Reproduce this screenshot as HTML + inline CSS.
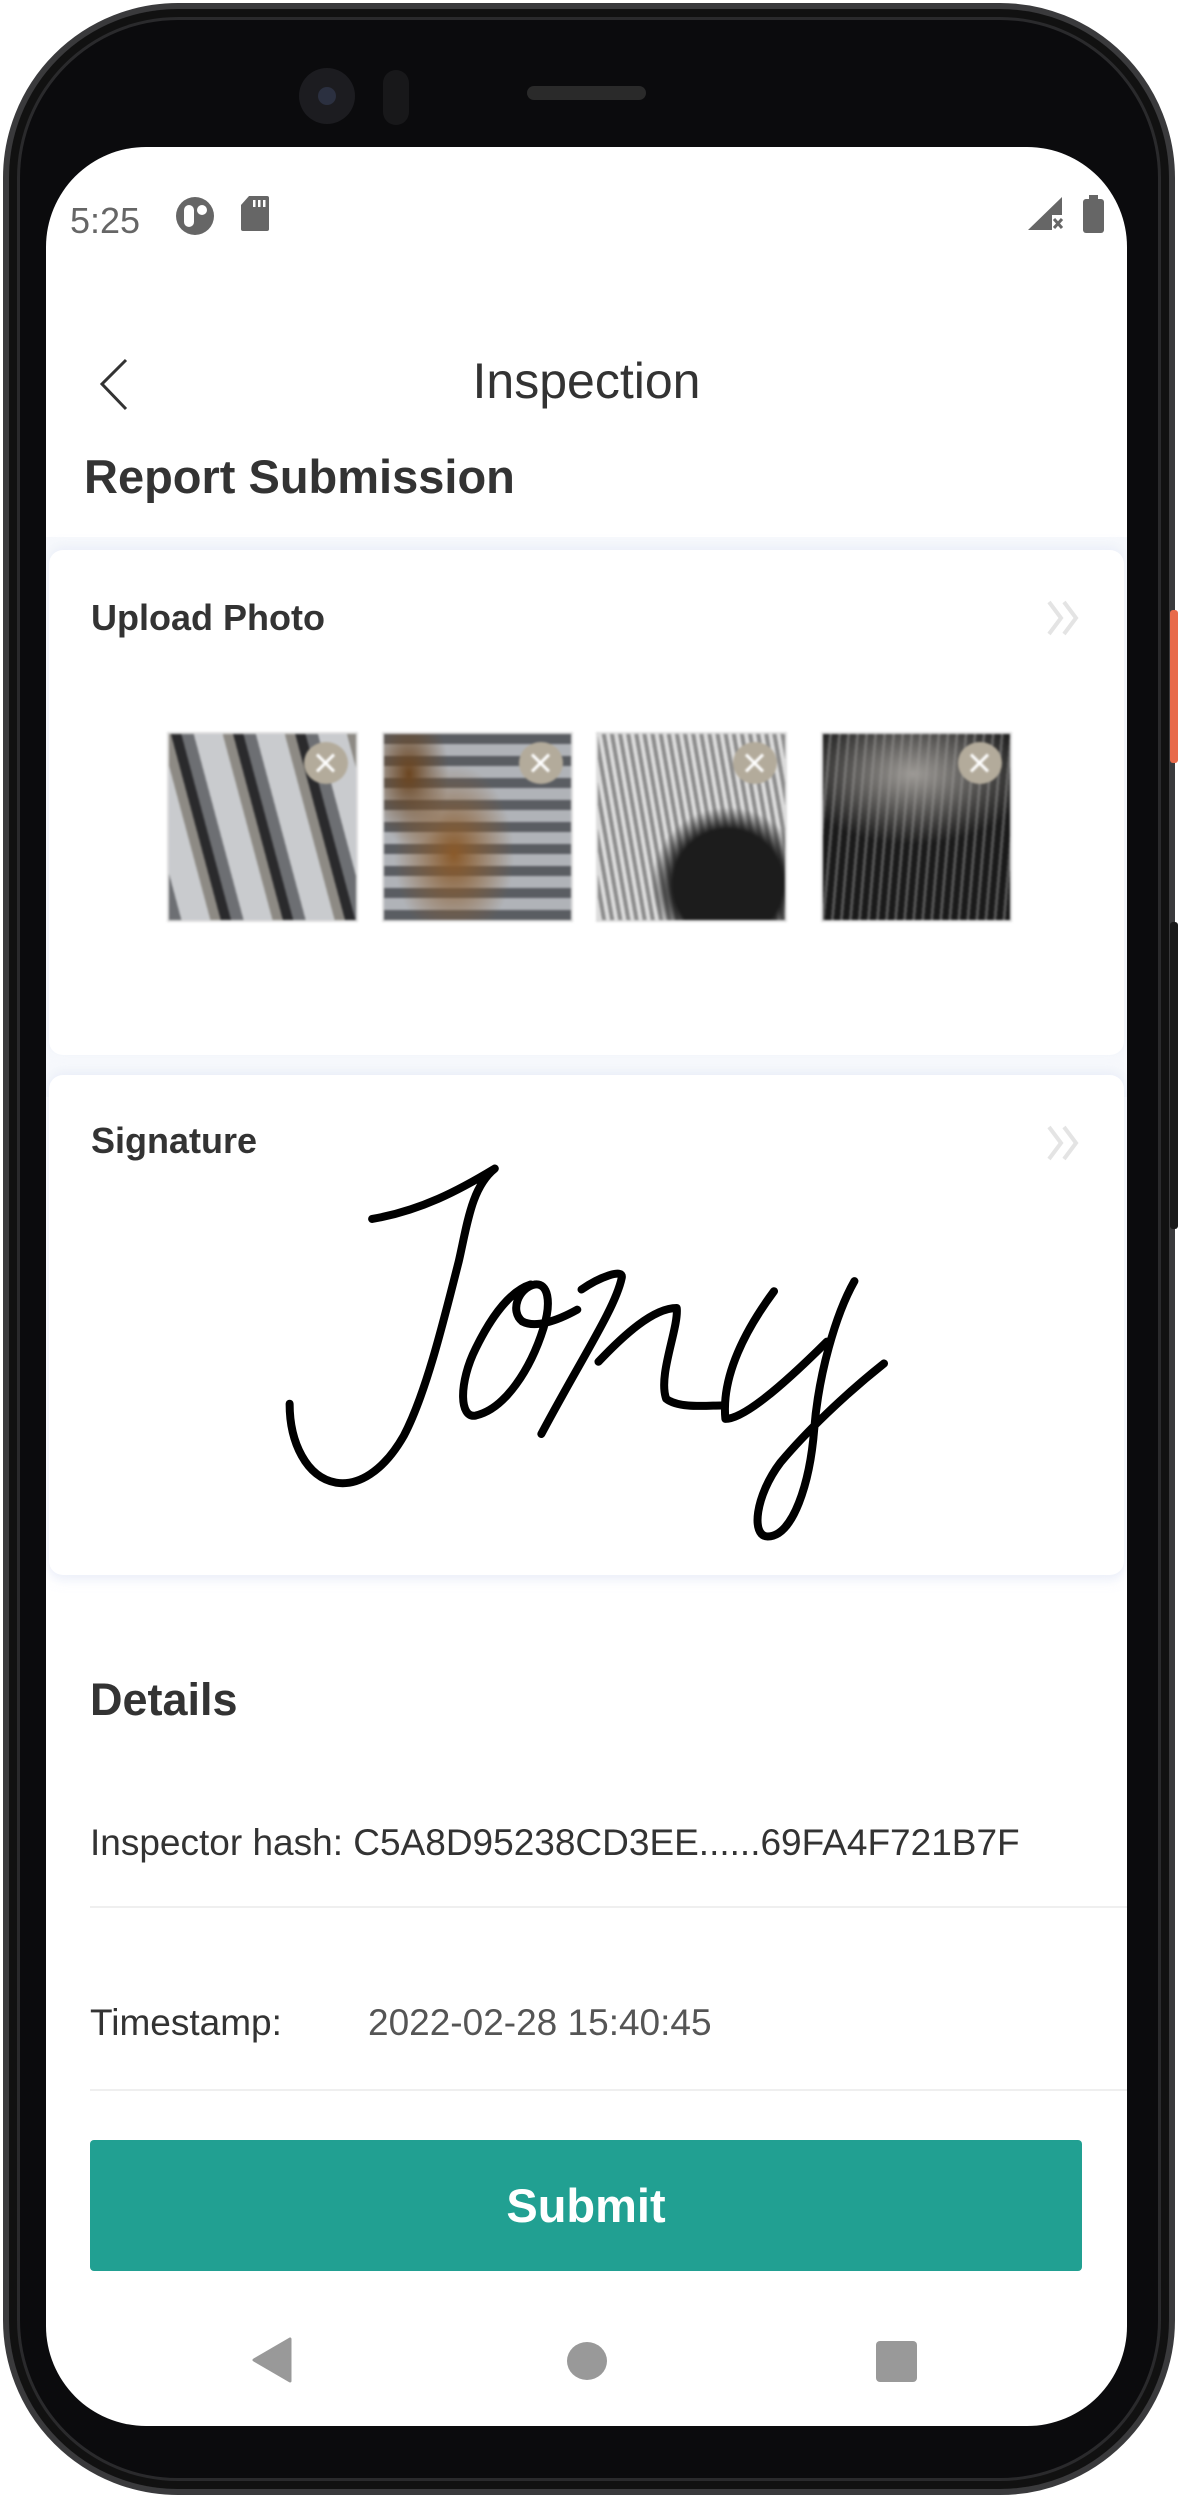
<!DOCTYPE html>
<html><head><meta charset="utf-8"><style>
*{margin:0;padding:0;box-sizing:border-box}
html,body{width:1178px;height:2498px;background:#fff;overflow:hidden;font-family:"Liberation Sans",sans-serif}
.abs{position:absolute}
#phone{left:3px;top:3px;width:1172px;height:2492px;border-radius:175px;background:#0b0b0d;border:6px solid #3a3a3c;box-shadow:inset 0 0 0 8px #111,inset 0 0 0 11px #2a2a2c}
#screen{left:46px;top:147px;width:1081px;height:2279px;background:#fff;border-radius:100px;overflow:hidden}
.t{position:absolute;white-space:nowrap;color:#333}
.card{position:absolute;left:3px;width:1075px;background:#fff;border-radius:14px;box-shadow:0 -4px 10px rgba(225,232,245,.55)}
.ph{position:absolute;width:191px;height:190px;border:2px solid #ddd;overflow:hidden;filter:blur(1px)}
.x{position:absolute;right:8px;top:8px;width:44px;height:42px;border-radius:50%;background:#b3ab9b}
.x:before,.x:after{content:"";position:absolute;left:20px;top:9px;width:3px;height:24px;background:#fff;transform:rotate(45deg)}
.x:after{transform:rotate(-45deg)}
.chev{position:absolute}
</style></head><body>
<div id="phone" class="abs"></div>
<div class="abs" style="left:1170px;top:610px;width:8px;height:153px;background:#e86a4a;border-radius:3px"></div>
<div class="abs" style="left:1170px;top:922px;width:8px;height:307px;background:#1a1a1a;border-radius:3px"></div>
<div class="abs" style="left:299px;top:68px;width:56px;height:56px;border-radius:50%;background:#1c1c20"></div>
<div class="abs" style="left:318px;top:87px;width:18px;height:18px;border-radius:50%;background:#2b3040"></div>
<div class="abs" style="left:383px;top:70px;width:26px;height:55px;border-radius:13px;background:#18181a"></div>
<div class="abs" style="left:527px;top:86px;width:119px;height:14px;border-radius:7px;background:#2a2a2a"></div>

<div id="screen" class="abs">
 <div class="t" style="left:24px;top:53px;font-size:36px;color:#666">5:25</div>
 <svg class="abs" style="left:129px;top:49px" width="40" height="40" viewBox="0 0 40 40"><circle cx="20" cy="20" r="19" fill="#666"/><rect x="9" y="9" width="10" height="22" rx="5" fill="#fff"/><circle cx="27" cy="14" r="5" fill="#fff"/></svg>
 <svg class="abs" style="left:194px;top:49px" width="30" height="35" viewBox="0 0 30 35"><path d="M9 0H27Q29 0 29 2V33Q29 35 27 35H3Q1 35 1 33V9Z" fill="#666"/><rect x="13" y="4" width="2.5" height="7" fill="#fff"/><rect x="18" y="4" width="2.5" height="7" fill="#fff"/><rect x="23" y="4" width="2.5" height="7" fill="#fff"/></svg>
 <svg class="abs" style="left:982px;top:50px" width="36" height="34" viewBox="0 0 36 34"><path d="M34 0V18H24V33H0Z" fill="#666"/><path d="M26 22L34 31M34 22L26 31" stroke="#666" stroke-width="3"/></svg>
 <div class="abs" style="left:1037px;top:52px;width:21px;height:34px;background:#666;border-radius:3px"></div>
 <div class="abs" style="left:1043px;top:48px;width:9px;height:5px;background:#666"></div>

 <svg class="abs" style="left:50px;top:210px" width="35" height="55" viewBox="0 0 35 55"><path d="M30 3L6 27L30 52" fill="none" stroke="#333" stroke-width="3"/></svg>
 <div class="t" style="left:0;width:1081px;text-align:center;top:205px;font-size:50px;color:#333">Inspection</div>
 <div class="t" style="left:38px;top:302px;font-size:47px;font-weight:bold;color:#333">Report Submission</div>

 <div class="abs" style="left:0;top:390px;width:1081px;height:560px;background:#f7f9fc"></div>
 <div class="card" style="top:403px;height:505px">
  <div class="t" style="left:42px;top:47px;font-size:36px;font-weight:bold">Upload Photo</div>
  <svg class="chev" style="left:996px;top:48px" width="36" height="40" viewBox="0 0 36 40"><path d="M4 4L16 20L4 36M19 4L31 20L19 36" fill="none" stroke="#e4e4e4" stroke-width="4"/></svg>
  <div class="ph" style="left:118px;top:182px;background:repeating-linear-gradient(75deg,#6d6f73 0 12px,#c9cbce 12px 40px,#8d8a84 40px 50px,#2a2a2c 50px 60px)"><div class="x"></div></div>
  <div class="ph" style="left:333px;top:182px;background:radial-gradient(ellipse 60px 90px at 70px 120px,#8a5a2a,transparent),radial-gradient(ellipse 40px 70px at 25px 40px,#6b4520,transparent),repeating-linear-gradient(0deg,#5a5d62 0 10px,#b0b3b8 10px 22px)"><div class="x"></div></div>
  <div class="ph" style="left:547px;top:182px;background:radial-gradient(ellipse 110px 110px at 130px 150px,#1c1c1c 50%,transparent 70%),repeating-linear-gradient(80deg,#dcdcdc 0 4px,#8c8c8c 4px 8px)"><div class="x"></div></div>
  <div class="ph" style="left:772px;top:182px;background:radial-gradient(ellipse 120px 70px at 90px 40px,#9d9a96,transparent),repeating-linear-gradient(95deg,#1a1a1a 0 6px,#555 6px 9px)"><div class="x"></div></div>
 </div>
 <div class="card" style="top:928px;height:500px;box-shadow:0 -4px 10px rgba(225,232,245,.55),0 6px 10px rgba(225,232,245,.55)">
  <div class="t" style="left:42px;top:45px;font-size:36px;font-weight:bold">Signature</div>
  <svg class="chev" style="left:996px;top:48px" width="36" height="40" viewBox="0 0 36 40"><path d="M4 4L16 20L4 36M19 4L31 20L19 36" fill="none" stroke="#e4e4e4" stroke-width="4"/></svg>
 </div>
 <svg class="abs" style="left:214px;top:993px" width="660" height="420" viewBox="0 0 1560 1250" preserveAspectRatio="none">
  <g fill="none" stroke="#000" stroke-width="8" stroke-linecap="round" stroke-linejoin="round">
   <path vector-effect="non-scaling-stroke" d="M265,235 C380,210 470,150 555,85 C500,140 490,250 470,360 C430,560 390,760 340,880 C290,990 230,1030 180,1020 C110,1005 70,900 70,785"/>
   <path vector-effect="non-scaling-stroke" d="M750,505 C700,540 650,560 620,540 C590,510 610,440 650,430 C680,425 690,480 670,560 C640,680 580,800 510,820 C470,830 470,720 510,620 C545,530 590,450 640,430"/>
   <path vector-effect="non-scaling-stroke" d="M760,445 C800,410 860,380 855,410 C840,500 760,650 665,875"/>
   <path vector-effect="non-scaling-stroke" d="M800,660 C860,580 930,500 985,500 C990,560 940,700 960,770 C990,800 1060,790 1090,790"/>
   <path vector-effect="non-scaling-stroke" d="M1215,450 C1150,560 1090,700 1100,830 C1150,830 1260,700 1340,600"/>
   <path vector-effect="non-scaling-stroke" d="M1405,420 C1360,520 1320,700 1310,860 C1300,1020 1260,1180 1200,1180 C1160,1180 1170,1060 1230,960 C1290,870 1380,760 1475,665"/>
  </g>
 </svg>

 <div class="t" style="left:44px;top:1527px;font-size:45px;font-weight:bold;color:#333">Details</div>
 <div class="t" style="left:44px;top:1675px;font-size:37px;color:#333;letter-spacing:0px">Inspector hash: C5A8D95238CD3EE......69FA4F721B7F</div>
 <div class="abs" style="left:44px;top:1759px;width:1037px;height:2px;background:#efefef"></div>
 <div class="t" style="left:44px;top:1855px;font-size:37px;color:#333">Timestamp:</div>
 <div class="t" style="left:322px;top:1855px;font-size:37px;color:#555">2022-02-28 15:40:45</div>
 <div class="abs" style="left:44px;top:1942px;width:1037px;height:2px;background:#efefef"></div>
 <div class="abs" style="left:44px;top:1993px;width:992px;height:131px;background:#21a092;border-radius:4px;color:#fff;font-size:47px;font-weight:bold;text-align:center;line-height:131px">Submit</div>

 <svg class="abs" style="left:206px;top:2190px" width="40" height="46" viewBox="0 0 40 46"><path d="M38 2V44L2 23Z" fill="#999" stroke="#999" stroke-width="3" stroke-linejoin="round"/></svg>
 <div class="abs" style="left:521px;top:2195px;width:40px;height:38px;border-radius:50%;background:#999"></div>
 <div class="abs" style="left:830px;top:2194px;width:41px;height:41px;border-radius:4px;background:#999"></div>
</div>
</body></html>
